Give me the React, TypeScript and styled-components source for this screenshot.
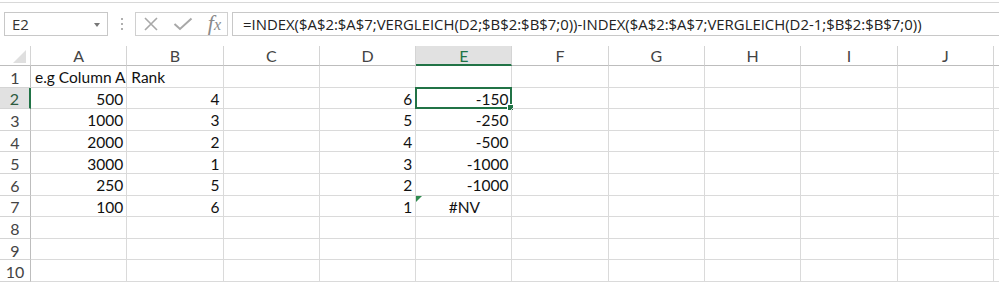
import React from 'react'
import styled, { createGlobalStyle } from 'styled-components'

const GlobalStyle = createGlobalStyle`
  html, body {
    margin: 0;
    padding: 0;
    background: #fff;
    overflow: hidden;
  }
`

const FONT = `Lato, 'Open Sans', 'Liberation Sans', sans-serif`
const GREEN = '#217346'

const columns = ['A', 'B', 'C', 'D', 'E', 'F', 'G', 'H', 'I', 'J']

type CellData = { text: string; align?: 'left' | 'right' | 'center' }

const data: Record<string, CellData> = {
  A1: { text: 'e.g Column A', align: 'left' },
  B1: { text: 'Rank', align: 'left' },
  A2: { text: '500' },
  A3: { text: '1000' },
  A4: { text: '2000' },
  A5: { text: '3000' },
  A6: { text: '250' },
  A7: { text: '100' },
  B2: { text: '4' },
  B3: { text: '3' },
  B4: { text: '2' },
  B5: { text: '1' },
  B6: { text: '5' },
  B7: { text: '6' },
  D2: { text: '6' },
  D3: { text: '5' },
  D4: { text: '4' },
  D5: { text: '3' },
  D6: { text: '2' },
  D7: { text: '1' },
  E2: { text: '-150' },
  E3: { text: '-250' },
  E4: { text: '-500' },
  E5: { text: '-1000' },
  E6: { text: '-1000' },
  E7: { text: '#NV', align: 'center' },
}

const App: React.FC = () => {
  const rows = Array.from({ length: 10 }, (_, i) => i + 1)

  return (
    <Page>
      <GlobalStyle />
      <FormulaBar>
        <NameBox>
          <span>E2</span>
          <DropArrow />
        </NameBox>
        <Grip>
          <i />
          <i />
          <i />
        </Grip>
        <ButtonGroup>
          <svg width="16" height="14" viewBox="0 0 16 14">
            <path d="M2 1 L14 13 M14 1 L2 13" stroke="#a8a8a8" strokeWidth="1.6" fill="none" />
          </svg>
          <svg width="20" height="14" viewBox="0 0 20 14">
            <path d="M1.5 7 L7 12 L18.5 1.5" stroke="#a8a8a8" strokeWidth="2" fill="none" />
          </svg>
          <Fx>
            f<sub>x</sub>
          </Fx>
        </ButtonGroup>
        <FormulaBox>
          =INDEX($A$2:$A$7;VERGLEICH(D2;$B$2:$B$7;0))-INDEX($A$2:$A$7;VERGLEICH(D2-1;$B$2:$B$7;0))
        </FormulaBox>
      </FormulaBar>

      <Sheet>
        <Corner>
          <CornerMark />
        </Corner>
        {columns.map((c) => (
          <ColHeader key={c} $active={c === 'E'}>
            {c}
          </ColHeader>
        ))}
        <ColHeader $active={false} />

        {rows.map((r) => (
          <React.Fragment key={r}>
            <RowHeader $active={r === 2}>{r}</RowHeader>
            {columns.map((c) => {
              const id = `${c}${r}`
              const cell = data[id]
              return (
                <Cell key={id} $align={cell?.align ?? 'right'}>
                  {cell?.text}
                  {id === 'E2' && (
                    <Selection>
                      <FillHandle />
                    </Selection>
                  )}
                  {id === 'E7' && <ErrorMark />}
                </Cell>
              )
            })}
            <Cell $align="left" />
          </React.Fragment>
        ))}
      </Sheet>
    </Page>
  )
}

const Page = styled.div`
  width: 999px;
  height: 283px;
  padding-top: 2px;
  box-sizing: border-box;
  font-family: ${FONT};
  overflow: hidden;
`

const FormulaBar = styled.div`
  display: flex;
  align-items: center;
  height: 43px;
  padding: 0 0 0 4px;
  border-top: 1px solid #d8d8d8;
  box-sizing: border-box;
`

const NameBox = styled.div`
  display: flex;
  align-items: center;
  justify-content: space-between;
  width: 104px;
  height: 24px;
  box-sizing: border-box;
  border: 1px solid #c8c8c8;
  padding: 0 7px 0 7px;
  font-family: 'Open Sans', 'Liberation Sans', sans-serif;
  font-size: 15px;
  color: #333;
`

const DropArrow = styled.span`
  width: 0;
  height: 0;
  border-left: 3px solid transparent;
  border-right: 3px solid transparent;
  border-top: 4px solid #777;
  margin-top: 1px;
`

const Grip = styled.div`
  display: flex;
  flex-direction: column;
  gap: 3px;
  width: 27px;
  align-items: center;

  i {
    width: 2px;
    height: 2px;
    background: #b0b0b0;
  }
`

const ButtonGroup = styled.div`
  display: flex;
  align-items: center;
  justify-content: space-between;
  width: 93px;
  height: 24px;
  box-sizing: border-box;
  border: 1px solid #d0d0d0;
  padding: 0 6px 0 7px;
`

const Fx = styled.span`
  font-family: 'Liberation Serif', serif;
  font-style: italic;
  font-size: 22px;
  color: #8a8a8a;
  line-height: 1;
  margin-top: -2px;

  sub {
    font-size: 16px;
    vertical-align: 0;
  }
`

const FormulaBox = styled.div`
  flex: 1;
  height: 24px;
  margin-left: 4px;
  box-sizing: border-box;
  border: 1px solid #c8c8c8;
  border-right: none;
  padding-left: 10px;
  display: flex;
  align-items: center;
  font-family: 'Open Sans', 'Liberation Sans', sans-serif;
  font-size: 14.9px;
  color: #222;
  white-space: nowrap;
  overflow: hidden;
`

const Sheet = styled.div`
  display: grid;
  grid-template-columns: 31px repeat(10, 96.3px) 1fr;
  grid-template-rows: 20px repeat(10, 21.6px);
  margin-top: 1px;
`

const Corner = styled.div`
  position: relative;
  border-right: 1px solid #d4d4d4;
  border-bottom: 1px solid #bdbdbd;
`

const CornerMark = styled.span`
  position: absolute;
  right: 4px;
  bottom: 2px;
  width: 0;
  height: 0;
  border-left: 13px solid transparent;
  border-bottom: 13px solid #dfdfdf;
`

const ColHeader = styled.div<{ $active: boolean }>`
  display: flex;
  align-items: center;
  justify-content: center;
  font-size: 16px;
  color: ${(p) => (p.$active ? GREEN : '#444')};
  background: ${(p) => (p.$active ? '#e1e1e1' : '#fff')};
  border-right: 1px solid #d4d4d4;
  border-bottom: ${(p) => (p.$active ? `2px solid ${GREEN}` : '1px solid #bdbdbd')};
`

const RowHeader = styled.div<{ $active: boolean }>`
  display: flex;
  align-items: center;
  justify-content: center;
  padding-top: 2px;
  font-size: 16px;
  color: ${(p) => (p.$active ? '#2d5a3f' : '#444')};
  background: ${(p) => (p.$active ? '#e1e1e1' : '#fff')};
  border-right: ${(p) => (p.$active ? `2px solid ${GREEN}` : '1px solid #bdbdbd')};
  border-bottom: 1px solid #d4d4d4;
`

const Cell = styled.div<{ $align: 'left' | 'right' | 'center' }>`
  position: relative;
  display: flex;
  align-items: center;
  justify-content: ${(p) =>
    p.$align === 'left' ? 'flex-start' : p.$align === 'center' ? 'center' : 'flex-end'};
  padding: 2px 3px 0 4px;
  font-size: 15.5px;
  color: #111;
  white-space: nowrap;
  border-right: 1px solid #dadada;
  border-bottom: 1px solid #dadada;
  overflow: visible;
`

const Selection = styled.span`
  position: absolute;
  left: -1px;
  top: -1px;
  right: -1px;
  bottom: -1px;
  border: 2px solid ${GREEN};
  pointer-events: none;
`

const FillHandle = styled.span`
  position: absolute;
  right: -4px;
  bottom: -4px;
  width: 5px;
  height: 5px;
  background: ${GREEN};
  border: 1px solid #fff;
`

const ErrorMark = styled.span`
  position: absolute;
  left: 0;
  top: 0;
  width: 0;
  height: 0;
  border-top: 6px solid #2e8b4e;
  border-right: 6px solid transparent;
`

export default App
